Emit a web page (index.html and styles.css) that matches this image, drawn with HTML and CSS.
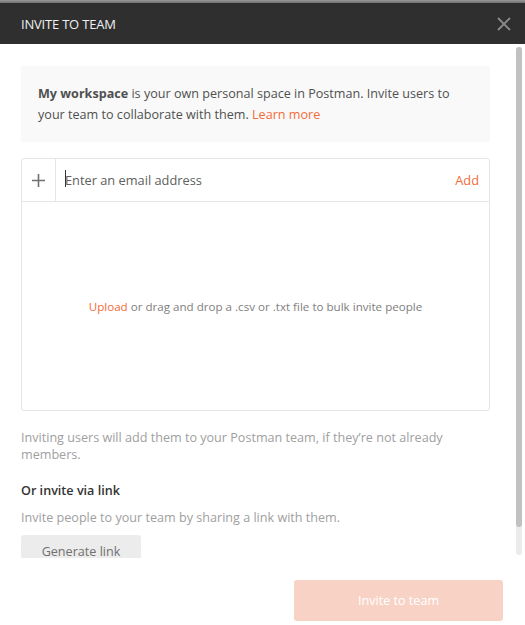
FILE: index.html
```html
<!DOCTYPE html>
<html>
<head>
<meta charset="utf-8">
<link rel="stylesheet" href="styles.css">
</head>
<body>
<div class="modal">
  <div class="topline"></div>
  <div class="header">
    <span class="title">INVITE TO TEAM</span>
    <svg class="close" width="14" height="14" viewBox="0 0 14 14"><path d="M1 1L13 13M13 1L1 13" stroke="#8a8a8a" stroke-width="1.8" fill="none"/></svg>
  </div>
  <div class="body-wrap">
    <div class="body">
      <div class="info"><b>My workspace</b> is your own personal space in Postman. Invite users to your team to collaborate with them. <span class="link">Learn more</span></div>
      <div class="invite-box">
        <div class="row">
          <div class="plus"><svg width="13" height="13" viewBox="0 0 13 13"><path d="M6.5 0V13M0 6.5H13" stroke="#707070" stroke-width="1.6"/></svg></div>
          <div class="input"><span class="caret"></span>Enter an email address</div>
          <div class="add">Add</div>
        </div>
        <div class="drop"><span><span class="link">Upload</span> or drag and drop a .csv or .txt file to bulk invite people</span></div>
      </div>
      <p class="hint">Inviting users will add them to your Postman team, if they’re not already members.</p>
      <p class="heading">Or invite via link</p>
      <p class="hint sub">Invite people to your team by sharing a link with them.</p>
      <button class="gen">Generate link</button>
    </div>
    <div class="scrollbar"><div class="thumb"></div></div>
  </div>
  <div class="footer">
    <button class="primary">Invite to team</button>
  </div>
</div>
</body>
</html>
```

FILE: styles.css
```css
* { box-sizing: border-box; }
html, body { margin: 0; padding: 0; background: #fff; }
body { font-family: "Open Sans", "Noto Sans", sans-serif; font-size: 12.6px; color: #505050; width: 525px; height: 625px; overflow: hidden; }
.modal { display: flex; flex-direction: column; height: 625px; }
.topline { height: 3px; background: linear-gradient(#9a9a9a, #6e6e6e); }
.header { height: 41px; background: #2f2f2f; display: flex; align-items: center; justify-content: space-between; padding: 0 14px 0 21px; }
.title { color: #f0f0f0; font-size: 13px; letter-spacing: -0.2px; }
.close { display: block; }
.body-wrap { position: relative; height: 514px; }
.body { height: 514px; overflow: hidden; padding: 22px 35px 10px 21px; }
.scrollbar { position: absolute; left: 516px; top: 3px; width: 6px; height: 508px; background: #ebebeb; border-radius: 3px; }
.thumb { height: 480px; background: #c1c1c1; border-radius: 3px; }
.info { background: #f9f9f9; padding: 17px 17px; line-height: 21px; color: #505050; }
.info b { font-weight: 700; }
.link { color: #f26b3a; }
.invite-box { margin-top: 16px; border: 1px solid #e6e6e6; border-radius: 3px; }
.row { height: 43px; display: flex; align-items: center; border-bottom: 1px solid #e6e6e6; }
.plus { width: 34px; height: 100%; border-right: 1px solid #e6e6e6; display: flex; align-items: center; justify-content: center; }
.plus svg { display: block; }
.input { flex: 1; padding-left: 9px; color: #606060; display: flex; align-items: center; position: relative; font-size: 12.8px; }
.caret { position: absolute; left: 9px; top: -1px; width: 1px; height: 17px; background: #333; }
.add { color: #f26b3a; padding-right: 10px; font-size: 12.8px; }
.drop { height: 208px; display: flex; align-items: center; justify-content: center; font-size: 11.6px; color: #808080; padding-top: 0; }
p { margin: 0; }
.hint { margin-top: 18px; line-height: 17px; color: #a0a0a0; }
.heading { margin-top: 19px; line-height: 17px; color: #333; font-weight: 600; }
.hint.sub { margin-top: 10px; }
.gen { margin-top: 9px; display: block; width: 120px; height: 32px; border: 0; border-radius: 3px; background: #ececec; color: #707070; font-family: inherit; font-size: 12.6px; padding: 0; }
.footer { flex: 1; display: flex; justify-content: flex-end; padding: 22px 22px 0 0; }
.primary { width: 209px; height: 41px; background: #f8d3c5; color: #fff; border: 0; border-radius: 3px; font-family: inherit; font-size: 12.6px; }
```
